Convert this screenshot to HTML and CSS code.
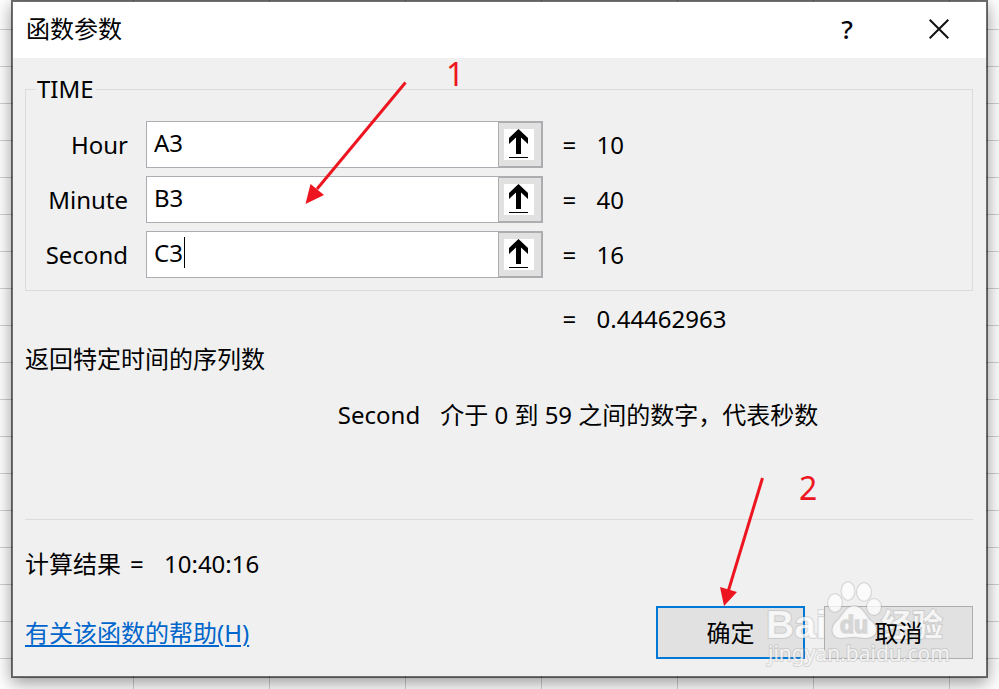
FILE: index.html
```html
<!DOCTYPE html>
<html lang="zh-CN">
<head>
<meta charset="utf-8">
<meta name="viewport" content="width=device-width, initial-scale=1">
<title>函数参数</title>
<link rel="stylesheet" href="styles.css">
</head>
<body>
<svg class="defs" aria-hidden="true">
  <symbol id="collapse" viewBox="0 0 30 31">
    <path d="M14.5 0 24 9V15L17 8.500V25H12V8.500L5 15V9Z"/>
    <path d="M5 28H24V29H5Z"/>
  </symbol>
</svg>
<main class="dialog">
  <header class="titlebar">
    <h1 class="title">函数参数</h1>
    <button class="title-btn help" type="button" aria-label="帮助">?</button>
    <button class="title-btn" type="button" aria-label="关闭">
      <svg class="close-icon" viewBox="0 0 20 20"><path d="M.7.7 19.300 19.300M19.300.7.7 19.300"/></svg>
    </button>
  </header>
  <form class="content">
    <fieldset class="group">
      <legend>TIME</legend>
      <div class="row">
        <label for="hour">Hour</label>
        <div class="field">
          <input id="hour" type="text" value="A3">
          <button class="ref-btn" type="button" aria-label="Hour"><svg><use href="#collapse"/></svg></button>
        </div>
        <div class="value"><span class="eq">=</span><output>10</output></div>
      </div>
      <div class="row">
        <label for="minute">Minute</label>
        <div class="field">
          <input id="minute" type="text" value="B3">
          <button class="ref-btn" type="button" aria-label="Minute"><svg><use href="#collapse"/></svg></button>
        </div>
        <div class="value"><span class="eq">=</span><output>40</output></div>
      </div>
      <div class="row">
        <label for="second">Second</label>
        <div class="field">
          <input id="second" type="text" value="C3">
          <span class="caret"></span>
          <button class="ref-btn" type="button" aria-label="Second"><svg><use href="#collapse"/></svg></button>
        </div>
        <div class="value"><span class="eq">=</span><output>16</output></div>
      </div>
    </fieldset>
    <div class="row total">
      <div class="value"><span class="eq">=</span><output>0.44462963</output></div>
    </div>
    <p class="summary">返回特定时间的序列数</p>
    <p class="arg-help"><span>Second</span><span>介于 0 到 59 之间的数字，代表秒数</span></p>
    <hr class="rule">
    <p class="result"><span>计算结果</span><span class="eq">=</span><output>10:40:16</output></p>
    <footer class="actions">
      <a class="help-link" href="#help">有关该函数的帮助(H)</a>
      <button class="btn primary" type="submit"><span>确定</span></button>
      <button class="btn" type="button"><span>取消</span></button>
      <svg class="note note-two" viewBox="0 0 120 140">
        <path class="shaft" d="M52.500 8 18 122"/>
        <path class="head" d="M14 136 10 117 27 122Z"/>
        <text x="89" y="30">2</text>
      </svg>
      <svg class="watermark" viewBox="0 0 190 90">
        <text class="wm-latin" x="5" y="58">Bai</text>
        <g class="paw">
          <ellipse cx="74" cy="23" rx="7" ry="9"/>
          <ellipse cx="87" cy="11" rx="6.500" ry="9"/>
          <ellipse cx="103" cy="12" rx="7" ry="9"/>
          <ellipse cx="113" cy="27" rx="7" ry="8"/>
          <path d="M93 26C102 26 104 36 110 41C119 48 116 58 105 58C98 58 98 57 93 57C87 57 85 58 80 58C70 58 69 47 76 41C82 36 84 26 93 26Z"/>
        </g>
        <text class="wm-du" x="79" y="53">du</text>
        <text class="wm-cjk" x="120" y="56">经验</text>
        <text class="wm-url" x="7" y="81">jingyan.baidu.com</text>
      </svg>
    </footer>
    <svg class="note note-one" viewBox="0 0 170 150">
      <path class="shaft" d="M105.500 22.500 17 129"/>
      <path class="head" d="M5.500 144 10.500 124 24 135Z"/>
      <text x="146" y="26">1</text>
    </svg>
  </form>
</main>
</body>
</html>
```
FILE: styles.css
```css
* {
  box-sizing: border-box;
}

body {
  margin: 0;
  min-height: 100vh;
  padding: 0 11px 11px;
  display: flex;
  overflow: hidden;
  background-color: #fff;
  background-image:
    repeating-linear-gradient(to bottom, transparent 0 29px, #d0d0d0 29px 30px, transparent 30px 37px),
    repeating-linear-gradient(to right, transparent 0 133px, #d0d0d0 133px 134px, transparent 134px 136px);
  color: #000;
  font: 24px/32px "Noto Sans", "Noto Sans CJK SC", sans-serif;
}

button,
input {
  font: inherit;
  color: inherit;
  border-radius: 0;
}

p,
h1 {
  margin: 0;
}

.defs {
  position: absolute;
  width: 0;
  height: 0;
}

.dialog {
  flex: 1;
  display: flex;
  flex-direction: column;
  border: 2px solid rgba(0, 0, 0, 0.56);
  background: #f0f0f0;
  background-clip: padding-box;
  box-shadow: 0 5px 16px rgba(0, 0, 0, 0.4);
}

.titlebar {
  display: flex;
  align-items: center;
  height: 56px;
  padding: 0 1px 2px 13px;
  background: #fff;
}

.title {
  flex: 1;
  font-size: 24px;
  font-weight: 400;
}

.title-btn {
  display: flex;
  align-items: center;
  justify-content: center;
  width: 92px;
  height: 54px;
  padding: 0;
  border: 0;
  background: transparent;
}

.help {
  font-size: 26px;
  font-weight: 500;
}

.close-icon {
  width: 20px;
  height: 20px;
  fill: none;
  stroke: #111;
  stroke-width: 2;
}

.content {
  position: relative;
  flex: 1;
  display: flex;
  flex-direction: column;
  padding: 15px 13px 17px 12px;
}

.group {
  display: grid;
  gap: 8px;
  min-width: 0;
  margin: 0;
  padding: 16px 0 12px;
  border: 1px solid #dcdcdc;
}

.group legend {
  margin-left: 10px;
  padding: 0 2px 0 1px;
}

.row {
  display: grid;
  grid-template-columns: 102px minmax(0, 434fr) minmax(0, 409fr);
  align-items: center;
}

.row label {
  text-align: right;
}

.field {
  position: relative;
  display: flex;
  height: 47px;
  margin-left: 18px;
  margin-right: 20px;
  border: 1px solid #abadb3;
  background: #fff;
}

.field input {
  flex: 1;
  min-width: 0;
  padding: 0 7px 4px;
  border: 0;
  outline: 0;
  background: transparent;
}

.caret {
  position: absolute;
  left: 37px;
  top: 5px;
  width: 1px;
  height: 31px;
  background: #000;
}

.ref-btn {
  display: flex;
  align-items: center;
  justify-content: center;
  width: 44px;
  padding: 0 1px 0 0;
  border: 1px solid #adadad;
  background: #e1e1e1;
}

.ref-btn svg {
  width: 30px;
  height: 31px;
  background: #fff;
}

.value {
  display: flex;
}

.eq {
  width: 34px;
}

.total {
  margin-top: 12px;
  padding: 0 1px;
}

.total .value {
  grid-column: 3;
}

.summary {
  margin-top: 8px;
}

.arg-help {
  display: flex;
  gap: 20px;
  margin: 24px 0 0 33%;
}

.rule {
  width: 100%;
  margin: 88px 0 28px;
  border: 0;
  border-top: 1px solid #dcdcdc;
}

.result {
  display: flex;
}

.result .eq {
  margin-left: 9px;
}

.actions {
  position: relative;
  display: flex;
  align-items: center;
  gap: 19px;
  margin-top: auto;
}

.help-link {
  margin-right: auto;
  color: #0066cc;
  text-underline-offset: 3px;
  text-decoration-thickness: 2px;
}

.btn {
  width: 149px;
  height: 53px;
  padding: 0;
  border: 1px solid #adadad;
  background: #e1e1e1;
}

.btn span {
  position: relative;
  z-index: 2;
}

.primary {
  border: 2px solid #0078d7;
}

.note {
  position: absolute;
  overflow: visible;
  pointer-events: none;
}

.note text {
  fill: #ed1520;
  font-size: 32px;
}

.shaft {
  fill: none;
  stroke: #ed1520;
  stroke-width: 3;
}

.head {
  fill: #ed1520;
}

.note-one {
  left: 287px;
  top: 2px;
  width: 170px;
  height: 150px;
}

.note-two {
  right: 143px;
  bottom: 49px;
  width: 120px;
  height: 140px;
}

.watermark {
  position: absolute;
  z-index: 1;
  right: 22px;
  bottom: -11px;
  width: 190px;
  height: 90px;
  overflow: visible;
  pointer-events: none;
  fill: #fff;
  fill-opacity: 0.75;
  stroke: #999;
  stroke-opacity: 0.3;
  stroke-width: 2;
  paint-order: stroke;
}

.wm-latin {
  font: bold 39px "Liberation Sans", sans-serif;
}

.wm-du {
  fill: #d0d0d0;
  font: bold 23px "Liberation Sans", sans-serif;
}

.wm-cjk {
  font: bold 31px "Noto Sans CJK SC", sans-serif;
}

.wm-url {
  font: 21px "Noto Sans", sans-serif;
}
```
